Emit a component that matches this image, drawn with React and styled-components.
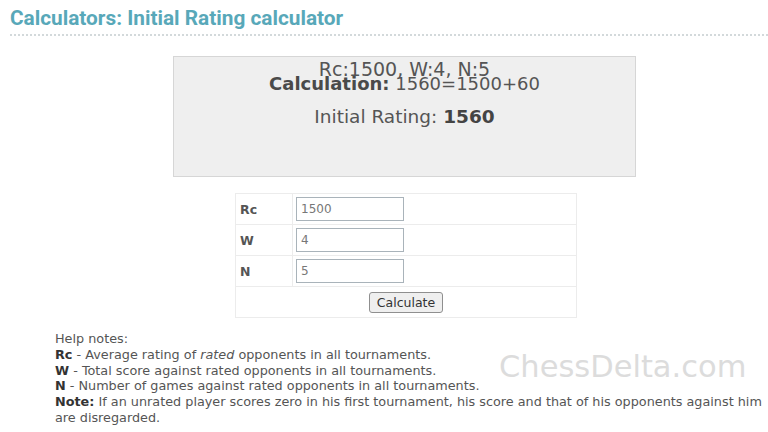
import React from "react";
import styled, { createGlobalStyle } from "styled-components";

const GlobalStyle = createGlobalStyle`
    html, body {
        margin: 0;
        padding: 0;
        background: #ffffff;
    }
    body {
        font-family: "DejaVu Sans", Verdana, sans-serif;
        color: #555555;
    }
`;

const Page = styled.div`
    width: 768px;
    height: 432px;
    overflow: hidden;
    padding: 6px 0 0 10px;
    box-sizing: border-box;
    position: relative;
`;

const Title = styled.h1`
    margin: 0;
    font-family: Roboto, "Liberation Sans", sans-serif;
    font-weight: 700;
    font-size: 20.8px;
    line-height: 25px;
    color: #58a8b9;
    padding-bottom: 3px;
    border-bottom: 2px dotted #d3d9db;
`;

const ResultBox = styled.div`
    margin: 20px 0 0 163px;
    width: 463px;
    height: 121px;
    box-sizing: border-box;
    background: #efefef;
    border: 1px solid #d6d6d6;
    text-align: center;
    color: #555555;
`;

const Params = styled.div`
    font-size: 19px;
    line-height: 18px;
    padding-top: 3px;
    height: 15px;
`;

const CalcLine = styled.div`
    font-size: 18px;
    line-height: 18px;
    b {
        color: #4a4a4a;
    }
`;

const RatingLine = styled.div`
    font-size: 18.5px;
    margin-top: 14px;
    line-height: 20px;
    b {
        color: #444444;
    }
`;

const Form = styled.table`
    margin: 16px 0 0 225px;
    width: 342px;
    border-collapse: collapse;
    font-size: 12.5px;
`;

const Row = styled.tr`
    height: 31px;
`;

const Label = styled.td`
    width: 52px;
    border: 1px solid #ececec;
    padding: 0 0 0 4px;
    font-weight: 700;
    color: #555555;
`;

const Cell = styled.td`
    border: 1px solid #ececec;
    padding: 0 3px;
    text-align: ${(p) => (p.center ? "center" : "left")};
`;

const Field = styled.input`
    width: 108px;
    height: 24px;
    box-sizing: border-box;
    border: 1px solid #a9b3ba;
    padding: 0 4px;
    font-family: "DejaVu Sans", Verdana, sans-serif;
    font-size: 12px;
    color: #777777;
    background: #ffffff;
`;

const Button = styled.button`
    height: 21px;
    padding: 0 7px;
    font-family: "DejaVu Sans", Verdana, sans-serif;
    font-size: 12.5px;
    color: #333333;
    background: #efefef;
    border: 1px solid #8f8f8f;
    border-radius: 3px;
`;

const Notes = styled.div`
    margin: 13px 0 0 45px;
    width: 712px;
    font-size: 12.8px;
    line-height: 15.8px;
    color: #555555;
    b {
        color: #333333;
    }
`;

const Watermark = styled.div`
    position: absolute;
    left: 499px;
    top: 349px;
    font-family: "DejaVu Sans", Verdana, sans-serif;
    font-size: 30.5px;
    color: #dcdcdc;
    pointer-events: none;
`;

export default function App() {
    return (
        <>
            <GlobalStyle />
            <Page>
                <Title>Calculators: Initial Rating calculator</Title>
                <ResultBox>
                    <Params>Rc:1500, W:4, N:5</Params>
                    <CalcLine>
                        <b>Calculation:</b> 1560=1500+60
                    </CalcLine>
                    <RatingLine>
                        Initial Rating: <b>1560</b>
                    </RatingLine>
                </ResultBox>
                <Form>
                    <tbody>
                        <Row>
                            <Label>Rc</Label>
                            <Cell><Field defaultValue="1500" /></Cell>
                        </Row>
                        <Row>
                            <Label>W</Label>
                            <Cell><Field defaultValue="4" /></Cell>
                        </Row>
                        <Row>
                            <Label>N</Label>
                            <Cell><Field defaultValue="5" /></Cell>
                        </Row>
                        <Row>
                            <Cell colSpan={2} center>
                                <Button>Calculate</Button>
                            </Cell>
                        </Row>
                    </tbody>
                </Form>
                <Notes>
                    Help notes:<br />
                    <b>Rc</b> - Average rating of <i>rated</i> opponents in all tournaments.<br />
                    <b>W</b> - Total score against rated opponents in all tournaments.<br />
                    <b>N</b> - Number of games against rated opponents in all tournaments.<br />
                    <b>Note:</b> If an unrated player scores zero in his first tournament, his score and that of his opponents against him are disregarded.
                </Notes>
                <Watermark>ChessDelta.com</Watermark>
            </Page>
        </>
    );
}
